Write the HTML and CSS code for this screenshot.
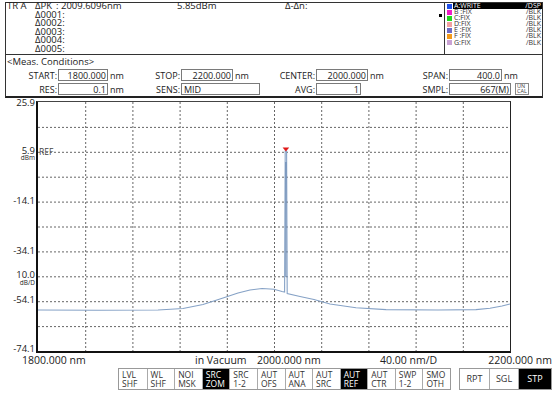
FILE: index.html
```html
<!DOCTYPE html>
<html>
<head>
<meta charset="utf-8">
<link rel="stylesheet" href="styles.css">
</head>
<body>
<div class="top">
  <div class="head">
    <div class="marks">
      <div class="line"><span class="c-tr">TR A</span><span class="c-lab">ΔPK</span><span class="c-val">: 2009.6096nm</span><span class="c-pow">5.85dBm</span><span class="c-dn">Δ-Δn:</span></div>
      <div class="line"><span class="c-tr"></span><span class="c-lab">Δ0001:</span></div>
      <div class="line"><span class="c-tr"></span><span class="c-lab">Δ0002:</span></div>
      <div class="line"><span class="c-tr"></span><span class="c-lab">Δ0003:</span></div>
      <div class="line"><span class="c-tr"></span><span class="c-lab">Δ0004:</span></div>
      <div class="line"><span class="c-tr"></span><span class="c-lab">Δ0005:</span></div>
    </div>
    <div class="sel"><i></i></div>
    <div class="legend">
      <div class="tr on"><b class="sw sa"></b><span class="nm">A:WRITE</span><span class="md">/DSP</span></div>
      <div class="tr"><b class="sw sb"></b><span class="nm">B :FIX</span><span class="md">/BLK</span></div>
      <div class="tr"><b class="sw sc"></b><span class="nm">C:FIX</span><span class="md">/BLK</span></div>
      <div class="tr"><b class="sw sd"></b><span class="nm">D:FIX</span><span class="md">/BLK</span></div>
      <div class="tr"><b class="sw se"></b><span class="nm">E :FIX</span><span class="md">/BLK</span></div>
      <div class="tr"><b class="sw sf"></b><span class="nm">F :FIX</span><span class="md">/BLK</span></div>
      <div class="tr"><b class="sw sg"></b><span class="nm">G:FIX</span><span class="md">/BLK</span></div>
    </div>
  </div>
  <div class="meas">
    <div class="title">&lt;Meas. Conditions&gt;</div>
    <div class="row">
      <div class="f f1"><span class="lb">START:</span><span class="box bw50">1800.000</span><span class="un">nm</span></div>
      <div class="f f2"><span class="lb">STOP:</span><span class="box bw52">2200.000</span><span class="un">nm</span></div>
      <div class="f f3"><span class="lb">CENTER:</span><span class="box bw52">2000.000</span><span class="un">nm</span></div>
      <div class="f f4"><span class="lb">SPAN:</span><span class="box bw53">400.0</span><span class="un">nm</span></div>
    </div>
    <div class="row">
      <div class="f f1"><span class="lb">RES:</span><span class="box bw50">0.1</span><span class="un">nm</span></div>
      <div class="f f2"><span class="lb">SENS:</span><span class="box bw79 left">MID</span></div>
      <div class="f f3"><span class="lb">AVG:</span><span class="box bw45">1</span></div>
      <div class="f f4"><span class="lb">SMPL:</span><span class="box bw62">667(M)</span><span class="uncal">UN<br>CAL</span></div>
    </div>
  </div>
</div>

<div class="plotrow">
  <div class="yaxis">
    <span class="yl" style="top:2px">25.9</span>
    <span class="yl" style="top:50px">5.9</span>
    <span class="yu" style="top:57px">dBm</span>
    <span class="yl" style="top:100px">-14.1</span>
    <span class="yl" style="top:150px">-34.1</span>
    <span class="yl" style="top:174px">10.0</span>
    <span class="yu" style="top:182px">dB/D</span>
    <span class="yl" style="top:199px">-54.1</span>
    <span class="yl" style="top:248px">-74.1</span>
  </div>
  <div class="plot">
    <span class="ref">REF</span>
    <svg class="grid" width="472" height="249" viewBox="0 0 472 249">
      <g stroke="#666" stroke-width="1" stroke-dasharray="2 2">
        <line x1="47.7" y1="0" x2="47.7" y2="249"/>
        <line x1="94.9" y1="0" x2="94.9" y2="249"/>
        <line x1="142.1" y1="0" x2="142.1" y2="249"/>
        <line x1="189.3" y1="0" x2="189.3" y2="249"/>
        <line x1="236.5" y1="0" x2="236.5" y2="249"/>
        <line x1="283.7" y1="0" x2="283.7" y2="249"/>
        <line x1="330.9" y1="0" x2="330.9" y2="249"/>
        <line x1="378.1" y1="0" x2="378.1" y2="249"/>
        <line x1="425.3" y1="0" x2="425.3" y2="249"/>
        <line x1="0" y1="25.4" x2="472" y2="25.4"/>
        <line x1="0" y1="50.3" x2="472" y2="50.3"/>
        <line x1="0" y1="75.2" x2="472" y2="75.2"/>
        <line x1="0" y1="100.1" x2="472" y2="100.1"/>
        <line x1="0" y1="125" x2="472" y2="125"/>
        <line x1="0" y1="149.9" x2="472" y2="149.9"/>
        <line x1="0" y1="174.8" x2="472" y2="174.8"/>
        <line x1="0" y1="199.7" x2="472" y2="199.7"/>
        <line x1="0" y1="224.6" x2="472" y2="224.6"/>
      </g>
      <polyline fill="none" stroke="#86a2c6" stroke-width="1.1" points="0,208 60,208.3 120,208 145,206.5 165,202.5 185,196 200,191 212,188 224,186.5 236,187.2 244,189.5 246.6,190 247.2,49 248.6,49 249.2,191.5 262,194.5 276,197.5 292,202 318,205.8 348,207.6 400,208 438,207.6 452,206.2 464,204 472,202"/>
      <line x1="247.9" y1="60" x2="247.9" y2="175" stroke="#5f80ad" stroke-width="1"/>
      <polygon points="244.6,45.5 251.2,45.5 247.9,49.5" fill="#e01818"/>
    </svg>
  </div>
</div>

<div class="xlabels">
  <span class="x1">1800.000 nm</span>
  <span class="x2">in Vacuum</span>
  <span class="x3">2000.000 nm</span>
  <span class="x4">40.00 nm/D</span>
  <span class="x5">2200.000 nm</span>
</div>

<div class="keys">
  <div class="grp1">
    <div class="key">LVL<br>SHF</div>
    <div class="key">WL<br>SHF</div>
    <div class="key">NOI<br>MSK</div>
    <div class="key dark">SRC<br>ZOM</div>
    <div class="key">SRC<br>1-2</div>
    <div class="key">AUT<br>OFS</div>
    <div class="key">AUT<br>ANA</div>
    <div class="key">AUT<br>SRC</div>
    <div class="key dark">AUT<br>REF</div>
    <div class="key">AUT<br>CTR</div>
    <div class="key">SWP<br>1-2</div>
    <div class="key">SMO<br>OTH</div>
  </div>
  <div class="grp2">
    <div class="key2">RPT</div>
    <div class="key2">SGL</div>
    <div class="key2 dark wide">STP</div>
  </div>
</div>
</body>
</html>
```
FILE: styles.css
```css
* { box-sizing: border-box; margin: 0; padding: 0; }

body {
  width: 554px;
  height: 401px;
  overflow: hidden;
  background: #fff;
  color: #222;
  font-family: "Open Sans", "Noto Sans", sans-serif;
}

/* ---------- top panels ---------- */
.top {
  margin: 2px 0 0 5px;
  width: 538px;
  border: 1px solid #333;
  border-bottom: 2px solid #222;
}

.head {
  display: flex;
  height: 52px;
  border-bottom: 1px solid #333;
}

.marks {
  flex: 1;
  padding-left: 1px;
  margin-top: -1px;
  font-size: 9.5px;
  line-height: 8.6px;
  white-space: nowrap;
}

.line { display: flex; height: 8.6px; }
.c-tr { width: 28px; flex: none; }
.c-lab { width: 21px; flex: none; }
.c-val { width: 121px; flex: none; }
.c-pow { width: 108px; flex: none; }

.sel { width: 5px; padding-top: 11px; }
.sel i { display: block; width: 3px; height: 3px; background: #000; }

.legend {
  width: 98px;
  border-left: 1px solid #333;
  font-size: 7px;
  line-height: 6.1px;
  color: #333;
}

.tr { display: flex; align-items: center; height: 6.1px; padding-left: 2px; }
.sw { display: block; width: 5px; height: 5px; flex: none; margin-right: 1px; }
.nm { flex: 1; padding-left: 1px; }
.md { padding-right: 1px; }
.tr.on .nm, .tr.on .md { background: #000; color: #fff; height: 6.1px; }
.sa { background: #1f4fe8; }
.sb { background: #ef1ec8; }
.sc { background: #1fd81f; }
.sd { background: #f2a0a0; }
.se { background: #6c6cc4; }
.sf { background: #f39a1a; }
.sg { background: #c9a2d4; }

.meas {
  height: 41px;
  font-size: 9.5px;
}

.title { height: 13px; line-height: 13px; padding-left: 1px; }

.row { display: flex; height: 14px; align-items: center; }

.f { display: flex; align-items: center; flex: none; white-space: nowrap; }
.f1 { width: 134px; }
.f2 { width: 130px; }
.f3 { width: 135px; }
.f4 { width: 136px; }
.f1 .lb { width: 52px; }
.f2 .lb { width: 41px; }
.f3 .lb { width: 46px; }
.f4 .lb { width: 44px; }
.lb { text-align: right; padding-right: 1px; flex: none; font-size: 9px; }

.box {
  display: block;
  height: 12px;
  line-height: 11px;
  border: 1px solid #7a7a7a;
  background: #fff;
  text-align: right;
  padding-right: 1px;
  font-size: 9px;
  flex: none;
}
.box.left { text-align: left; padding-left: 2px; }
.bw45 { width: 45px; }
.bw50 { width: 50px; }
.bw52 { width: 52px; }
.bw53 { width: 53px; }
.bw62 { width: 62px; }
.bw79 { width: 79px; }

.un { padding-left: 2px; font-size: 9px; }

.uncal {
  margin-left: 4px;
  border: 1px solid #888;
  font-size: 5.5px;
  line-height: 5px;
  padding: 0 1px;
  color: #444;
  height: 12px;
}

/* ---------- plot ---------- */
.plotrow { display: flex; margin-top: 3px; }

.yaxis { position: relative; width: 36px; height: 252px; font-size: 9.5px; }
.yl, .yu {
  position: absolute;
  right: 1px;
  line-height: 8px;
  transform: translateY(-50%);
  white-space: nowrap;
}
.yu { font-size: 6.5px; line-height: 6px; }

.plot {
  position: relative;
  width: 475px;
  height: 252px;
  border-top: 1px solid #444;
  border-left: 2px solid #111;
  border-bottom: 2px solid #111;
  border-right: 1px solid #222;
}
.grid { display: block; }
.ref {
  position: absolute;
  left: 1px;
  top: 46px;
  font-size: 8.5px;
  line-height: 8px;
  color: #444;
}

/* ---------- x labels ---------- */
.xlabels {
  display: flex;
  height: 15px;
  font-size: 10.5px;
  line-height: 15px;
  white-space: nowrap;
}
.x1 { width: 195px; padding-left: 22px; }
.x2 { width: 62px; }
.x3 { width: 123px; }
.x4 { width: 102px; }
.x5 { width: 70px; text-align: right; }

/* ---------- soft keys ---------- */
.keys { display: flex; padding-left: 118px; }

.grp1 {
  display: grid;
  grid-template-columns: repeat(12, 1fr);
  width: 333px;
  height: 22px;
  border: 1px solid #999;
}
.key {
  font-size: 8.5px;
  line-height: 8.5px;
  padding: 2px 0 0 3px;
  border-left: 1px solid #aaa;
  color: #333;
}
.key:first-child { border-left: 0; }

.grp2 {
  display: flex;
  margin-left: 8px;
  width: 93px;
  height: 22px;
  border: 1px solid #999;
}
.key2 {
  width: 29px;
  font-size: 9px;
  line-height: 20px;
  text-align: center;
  border-left: 1px solid #aaa;
  color: #333;
}
.key2:first-child { border-left: 0; }
.key2.wide { flex: 1; }

.key.dark, .key2.dark { background: #000; color: #fff; }
```
